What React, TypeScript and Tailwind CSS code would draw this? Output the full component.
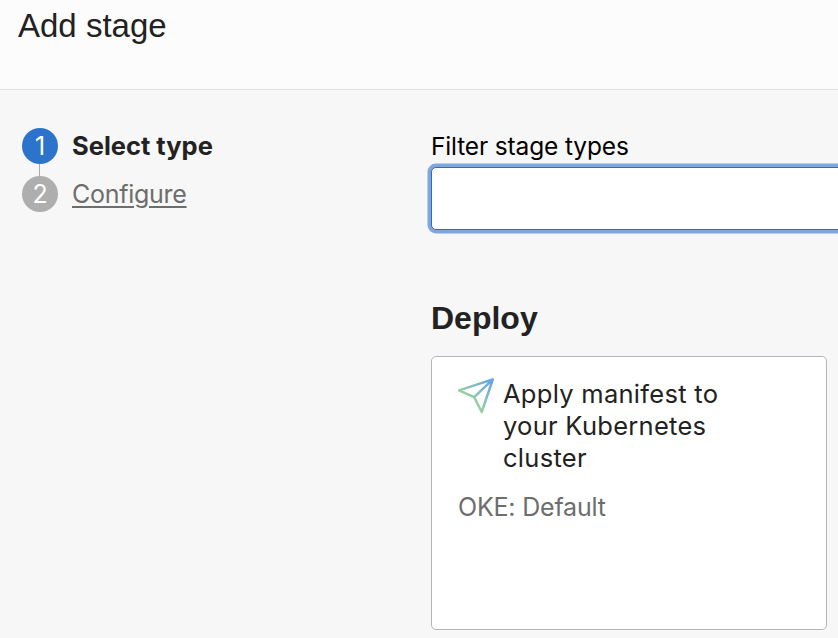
const body = "font-['Inter','Liberation_Sans',sans-serif]";
const display = "font-['Liberation_Sans',sans-serif]";

function SendIcon() {
  return (
    <svg width="38" height="38" viewBox="0 0 38 38" fill="none" className="block shrink-0">
      <defs>
        <linearGradient id="send" x1="36" y1="2" x2="13" y2="25" gradientUnits="userSpaceOnUse">
          <stop offset="0" stopColor="#60a0f0" />
          <stop offset="1" stopColor="#9bd09d" />
        </linearGradient>
      </defs>
      <path
        d="M34.8 2.4 L1 13.4 L16.2 20.2 L23.7 35 Z M34.8 2.4 L16.2 20.2"
        stroke="url(#send)"
        strokeWidth="2.5"
        strokeLinejoin="round"
      />
    </svg>
  );
}

export default function App() {
  return (
    <div className={`flex h-[638px] w-[838px] flex-col overflow-hidden bg-[#f7f7f7] text-[#222] ${body}`}>
      <header className="h-[90px] shrink-0 border-b border-[#e2e2e2] bg-[#fcfcfc] pl-[18px] pt-[6px]">
        <h1 className={`w-fit whitespace-nowrap text-[33px] leading-[40px] ${display}`}>Add stage</h1>
      </header>
      <div className="flex min-h-0 flex-1">
        <nav className="flex w-[431px] shrink-0 flex-col pl-[22px] pt-[38px]">
          <div className="flex h-9 items-center gap-[14px]">
            <span className="flex size-9 items-center justify-center rounded-full bg-[#2c73cc] text-[25px] leading-none text-white">1</span>
            <span className="whitespace-nowrap text-[25.5px] font-bold leading-8">Select type</span>
          </div>
          <div className="ml-[17px] h-3 w-px bg-[#aaa]" />
          <div className="flex h-9 items-center gap-[14px]">
            <span className="flex size-9 items-center justify-center rounded-full bg-[#aeaeae] text-[25px] leading-none text-white">2</span>
            <a className="whitespace-nowrap text-[25px] leading-8 tracking-[-0.27px] text-[#6d6d6d] underline decoration-2 underline-offset-[3px]">Configure</a>
          </div>
        </nav>
        <main className="w-[407px] shrink-0 pt-[40px]">
          <label className="block w-fit whitespace-nowrap text-[24.5px] leading-8 tracking-[-0.15px] text-black">Filter stage types</label>
          <input className="mt-[5px] block h-[63px] w-[440px] rounded-[5px] border border-[#2c6cbc] bg-white px-4 outline-none ring-[3.5px] ring-[#7fa6dd]" />
          <h2 className={`mt-[68px] w-fit whitespace-nowrap text-[32px] font-bold leading-10 ${display}`}>Deploy</h2>
          <section className="mt-[18px] h-[274px] w-[396px] rounded-[5px] border border-[#b2b6bc] bg-white pl-[26px] pt-[20px]">
            <div className="flex gap-[7px]">
              <SendIcon />
              <h3 className="pt-px text-[25.5px] leading-8 tracking-[0.28px]">
                Apply manifest to
                <br />
                your Kubernetes
                <br />
                cluster
              </h3>
            </div>
            <p className="mt-[17px] w-fit whitespace-nowrap text-[25px] leading-8 tracking-[-0.2px] text-[#6d6d6d]">OKE: Default</p>
          </section>
        </main>
      </div>
    </div>
  );
}
